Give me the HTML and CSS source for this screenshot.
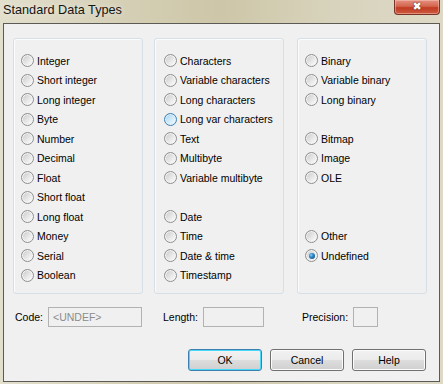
FILE: index.html
```html
<!DOCTYPE html>
<html lang="en">
<head>
    <meta charset="UTF-8">
    <title>Standard Data Types</title>
    <link rel="stylesheet" href="styles.css">
</head>
<body>
    <div class="window">
        <div class="titlebar">
            <span class="title">Standard Data Types</span>
            <span class="close">&#x2716;</span>
        </div>
        <div class="client">
            <div class="groups">
                <div class="group g1">
                    <div class="item"><span class="radio"></span>Integer</div>
                    <div class="item"><span class="radio"></span>Short integer</div>
                    <div class="item"><span class="radio"></span>Long integer</div>
                    <div class="item"><span class="radio"></span>Byte</div>
                    <div class="item"><span class="radio"></span>Number</div>
                    <div class="item"><span class="radio"></span>Decimal</div>
                    <div class="item"><span class="radio"></span>Float</div>
                    <div class="item"><span class="radio"></span>Short float</div>
                    <div class="item"><span class="radio"></span>Long float</div>
                    <div class="item"><span class="radio"></span>Money</div>
                    <div class="item"><span class="radio"></span>Serial</div>
                    <div class="item"><span class="radio"></span>Boolean</div>
                </div>
                <div class="group g2">
                    <div class="item"><span class="radio"></span>Characters</div>
                    <div class="item"><span class="radio"></span>Variable characters</div>
                    <div class="item"><span class="radio"></span>Long characters</div>
                    <div class="item"><span class="radio hover"></span>Long var characters</div>
                    <div class="item"><span class="radio"></span>Text</div>
                    <div class="item"><span class="radio"></span>Multibyte</div>
                    <div class="item"><span class="radio"></span>Variable multibyte</div>
                    <div class="item"></div>
                    <div class="item"><span class="radio"></span>Date</div>
                    <div class="item"><span class="radio"></span>Time</div>
                    <div class="item"><span class="radio"></span>Date &amp; time</div>
                    <div class="item"><span class="radio"></span>Timestamp</div>
                </div>
                <div class="group g3">
                    <div class="item"><span class="radio"></span>Binary</div>
                    <div class="item"><span class="radio"></span>Variable binary</div>
                    <div class="item"><span class="radio"></span>Long binary</div>
                    <div class="item"></div>
                    <div class="item"><span class="radio"></span>Bitmap</div>
                    <div class="item"><span class="radio"></span>Image</div>
                    <div class="item"><span class="radio"></span>OLE</div>
                    <div class="item"></div>
                    <div class="item"></div>
                    <div class="item"><span class="radio"></span>Other</div>
                    <div class="item"><span class="radio checked"></span>Undefined</div>
                </div>
            </div>
            <div class="fields">
                <span class="label l-code">Code:</span>
                <span class="input in-code">&lt;UNDEF&gt;</span>
                <span class="label l-length">Length:</span>
                <span class="input in-length"></span>
                <span class="label l-prec">Precision:</span>
                <span class="input in-prec"></span>
            </div>
            <div class="buttons">
                <button class="btn default">OK</button>
                <button class="btn">Cancel</button>
                <button class="btn">Help</button>
            </div>
        </div>
    </div>
</body>
</html>
```

FILE: styles.css
```css
html, body {
    margin: 0;
    padding: 0;
}

body {
    width: 443px;
    height: 384px;
    overflow: hidden;
    background: #d6d1b9;
    font-family: "Liberation Sans", Arial, sans-serif;
}

.window {
    height: 384px;
    padding: 0 3px 2px 3px;
    box-sizing: border-box;
    display: flex;
    flex-direction: column;
    background: linear-gradient(90deg, #e2dfcd 0%, #d4ceb4 30%, #cdc6a8 50%, #d8d3bc 75%, #ddd9c6 100%);
}

.titlebar {
    height: 23px;
    display: flex;
    align-items: flex-start;
}

.title {
    font-size: 12.7px;
    color: #151515;
    padding: 3px 0 0 0;
    text-shadow: 0 0 6px rgba(255, 255, 255, 0.7);
}

.close {
    margin-left: auto;
    width: 46px;
    height: 15px;
    box-sizing: border-box;
    border: 1px solid #7a3328;
    border-top: none;
    border-radius: 0 0 4px 4px;
    background: linear-gradient(#e3907f 0%, #d4664f 45%, #c13b23 55%, #cc5a40 100%);
    box-shadow: inset 0 0 0 1px rgba(255, 210, 200, 0.45);
    color: #fff;
    font-family: "DejaVu Sans", sans-serif;
    font-size: 11px;
    line-height: 14px;
    text-align: center;
    text-shadow: 0 0 1px #5a1c12, 0 0 1px #5a1c12;
}

.client {
    flex: 1;
    background: #f0f0f0;
    border: 1px solid #5b5a55;
    display: flex;
    flex-direction: column;
}

.groups {
    display: flex;
    padding: 14px 0 0 9px;
}

.group {
    width: 130px;
    height: 256px;
    box-sizing: border-box;
    border: 1px solid #d5dfe5;
    border-radius: 3px;
    box-shadow: inset 1px 1px 0 #fbfcfd;
    padding: 12px 0 0 7px;
    font-size: 10.5px;
    color: #000;
}

.g2 {
    margin-left: 11px;
    padding-left: 9px;
}

.g3 {
    margin-left: 13px;
}

.item {
    height: 19.5px;
    display: flex;
    align-items: center;
    white-space: nowrap;
}

.radio {
    width: 13px;
    height: 13px;
    box-sizing: border-box;
    border-radius: 50%;
    border: 1px solid #8e8f8f;
    background: linear-gradient(135deg, #cdcdcd 10%, #e8e8e8 55%, #fbfbfb 90%);
    box-shadow: inset 0 0 0 1px #f4f4f4;
    margin-right: 3px;
    flex: none;
    position: relative;
}

.radio.hover {
    border-color: #3c7fb1;
    background: linear-gradient(135deg, #a8d6f5 10%, #d4ecfb 55%, #eef8fe 90%);
    box-shadow: inset 0 0 0 1px #def1fc;
}

.radio.checked::after {
    content: "";
    position: absolute;
    left: 2.5px;
    top: 2.5px;
    width: 6px;
    height: 6px;
    border-radius: 50%;
    background: radial-gradient(circle at 35% 35%, #8fd0f8 0, #2d8bd0 35%, #0b3f6e 100%);
}

.fields {
    display: flex;
    align-items: center;
    height: 20px;
    margin-top: 13px;
    padding-left: 11px;
    font-size: 10.5px;
}

.label {
    color: #000;
}

.l-code {
    width: 33px;
}

.l-length {
    width: 40px;
    margin-left: 21px;
}

.l-prec {
    width: 51px;
    margin-left: 38px;
}

.input {
    height: 20px;
    box-sizing: border-box;
    border: 1px solid #b2b2b2;
    background: #f0f0f0;
    color: #8c8c8c;
    line-height: 18px;
    padding-left: 4px;
    font-size: 10.5px;
}

.in-code {
    width: 94px;
}

.in-length {
    width: 61px;
}

.in-prec {
    width: 25px;
}

.buttons {
    display: flex;
    justify-content: flex-end;
    gap: 8px;
    margin-top: 22px;
    padding-right: 13px;
}

.btn {
    width: 74px;
    height: 22px;
    box-sizing: border-box;
    border: 1px solid #707070;
    border-radius: 3px;
    background: linear-gradient(#f2f2f2 0%, #ebebeb 48%, #dddddd 52%, #cfcfcf 100%);
    box-shadow: inset 0 0 0 1px #fcfcfc;
    font-family: "Liberation Sans", Arial, sans-serif;
    font-size: 10.5px;
    color: #000;
    padding: 0;
}

.btn.default {
    border-color: #3c7fb1;
    box-shadow: inset 0 0 0 1px #48d8fb;
}
```
